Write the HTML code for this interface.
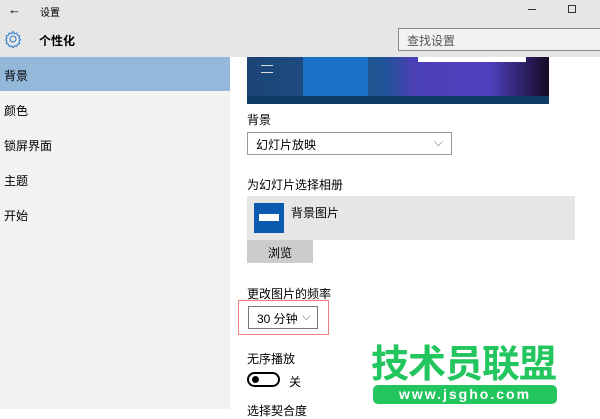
<!DOCTYPE html><html><head><meta charset="utf-8"><style>
*{margin:0;padding:0;box-sizing:border-box}
body{width:600px;height:409px;overflow:hidden;background:#fff;font-family:"Liberation Sans","Noto Sans CJK SC",sans-serif;font-size:12px;color:#000;position:relative}
.a{position:absolute}
</style></head><body>
<div class="a" style="left:0;top:0;width:600px;height:57px;background:#e6e6e6"></div>
<div class="a" style="left:8px;top:2px;font-size:13px">←</div>
<div class="a" style="left:40px;top:4px;font-size:10px">设置</div>
<div class="a" style="left:528px;top:9px;width:8px;height:1px;background:#333"></div>
<div class="a" style="left:568px;top:5px;width:8px;height:8px;border:1px solid #333"></div>
<svg class="a" style="left:4px;top:30px" width="18" height="18" viewBox="0 0 24 24"><path d="M12 2l2 3 3-1 1 3 3 1-1 3 2 2-2 2 1 3-3 1-1 3-3-1-2 3-2-3-3 1-1-3-3-1 1-3-2-2 2-2-1-3 3-1 1-3 3 1z" fill="none" stroke="#2b7bd0" stroke-width="1.4"/><circle cx="12" cy="12" r="4" fill="none" stroke="#2b7bd0" stroke-width="1.4"/></svg>
<div class="a" style="left:39px;top:32px;font-size:12px;font-weight:bold">个性化</div>
<div class="a" style="left:398px;top:28px;width:210px;height:23px;border:1px solid #888;background:#f2f2f2;padding:3px 8px;color:#555">查找设置</div>
<div class="a" style="left:0;top:57px;width:230px;height:352px;background:#f2f2f2"></div>
<div class="a" style="left:0;top:57px;width:230px;height:34px;background:#93b8d9"></div>
<div class="a" style="left:4px;top:67px">背景</div>
<div class="a" style="left:4px;top:102px">颜色</div>
<div class="a" style="left:4px;top:137px">锁屏界面</div>
<div class="a" style="left:4px;top:172px">主题</div>
<div class="a" style="left:4px;top:207px">开始</div>
<div class="a" style="left:247px;top:57px;width:302px;height:47px;background:linear-gradient(90deg,#1c4474 0%,#1e5594 45%,#4a3fb5 55%,#5040c0 80%,#150a25 100%)"></div>
<div class="a" style="left:303px;top:57px;width:65px;height:39px;background:#1a73c8"></div>
<div class="a" style="left:418px;top:57px;width:108px;height:5px;background:#fff"></div>
<div class="a" style="left:247px;top:96px;width:302px;height:8px;background:#0e3a63"></div>
<div class="a" style="left:261px;top:65px;width:12px;height:1px;background:#ddd;box-shadow:0 7px 0 #ddd"></div>
<div class="a" style="left:247px;top:111px">背景</div>
<div class="a" style="left:247px;top:132px;width:205px;height:23px;border:1px solid #999;padding:3px 8px">幻灯片放映<span style="position:absolute;right:8px;top:2px;color:#777">⌵</span></div>
<div class="a" style="left:247px;top:176px">为幻灯片选择相册</div>
<div class="a" style="left:247px;top:196px;width:328px;height:44px;background:#e6e6e6"></div>
<div class="a" style="left:254px;top:203px;width:30px;height:30px;background:#0a5bb0"></div>
<div class="a" style="left:259px;top:214px;width:20px;height:7px;background:#fff"></div>
<div class="a" style="left:291px;top:204px">背景图片</div>
<div class="a" style="left:247px;top:240px;width:66px;height:23px;background:#ccc;text-align:center;padding-top:4px">浏览</div>
<div class="a" style="left:247px;top:285px">更改图片的频率</div>
<div class="a" style="left:238px;top:300px;width:91px;height:35px;border:1px solid #f08080"></div>
<div class="a" style="left:248px;top:306px;width:70px;height:23px;border:1px solid #777;padding:3px 8px">30 分钟<span style="position:absolute;right:6px;top:2px;color:#777">⌵</span></div>
<div class="a" style="left:247px;top:350px">无序播放</div>
<div class="a" style="left:247px;top:372px;width:33px;height:15px;border:2px solid #000;border-radius:8px"></div>
<div class="a" style="left:252px;top:376px;width:7px;height:7px;background:#000;border-radius:50%"></div>
<div class="a" style="left:289px;top:373px">关</div>
<div class="a" style="left:247px;top:402px">选择契合度</div>
<div class="a" style="left:371px;top:340px;font-size:38px;font-weight:bold;color:#22c55e;letter-spacing:-1px;line-height:50px">技术员联盟</div>
<div class="a" style="left:373px;top:385px;width:184px;height:19px;background:#22c55e;border-radius:5px;color:#fff;font-weight:bold;font-size:14px;text-align:center;line-height:19px;letter-spacing:2px">www.jsgho.com</div>
</body></html>
